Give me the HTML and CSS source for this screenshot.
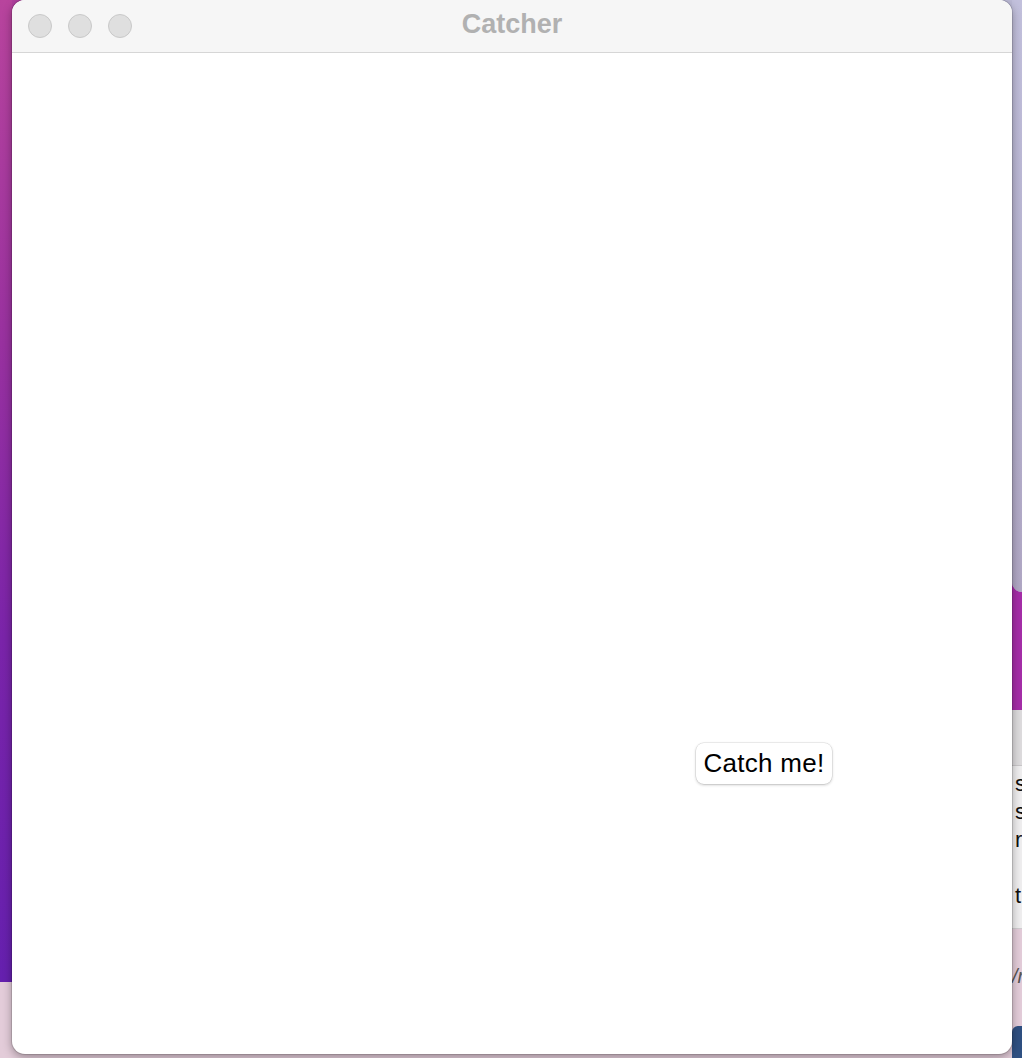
FILE: index.html
```html
<!DOCTYPE html>
<html>
<head>
<meta charset="utf-8">
<link rel="stylesheet" href="styles.css">
</head>
<body>
<div class="desktop">
  <div class="left-strip">
    <div class="left-grad"></div>
    <div class="left-pink"></div>
  </div>
  <div class="window">
    <div class="titlebar">
      <div class="lights">
        <span class="light"></span>
        <span class="light"></span>
        <span class="light"></span>
      </div>
      <div class="title">Catcher</div>
    </div>
    <div class="content">
      <button class="catch">Catch me!</button>
    </div>
  </div>
  <div class="right-strip">
    <div class="r-lavender"></div>
    <div class="r-magenta"></div>
    <div class="r-grey"></div>
    <div class="r-panel">
      <div>s</div>
      <div>s</div>
      <div>r</div>
      <div>&nbsp;</div>
      <div>t</div>
    </div>
    <div class="r-pink">
      <div class="r-path">/r</div>
      <div class="r-blue"></div>
    </div>
  </div>
</div>
</body>
</html>
```

FILE: styles.css
```css
html, body {
  margin: 0;
  padding: 0;
}
body {
  width: 1022px;
  height: 1058px;
  overflow: hidden;
  font-family: "Liberation Sans", Arial, sans-serif;
}
.desktop {
  width: 1022px;
  height: 1058px;
  display: grid;
  grid-template-columns: 12px 1000px 10px;
  background:
    linear-gradient(to bottom, transparent 982px, #e3ccd9 982px),
    linear-gradient(to right, #b0409e 50%, #bcbad6 50%);
}
.left-strip {
  display: flex;
  flex-direction: column;
}
.left-grad {
  height: 982px;
  background: linear-gradient(to bottom, #b8449d 0%, #98319f 35%, #7a24a9 65%, #6520ae 100%);
}
.left-pink {
  flex: 1;
  background: #e3ccd9;
}
.window {
  height: 1054px;
  background: #ffffff;
  border-radius: 13px;
  overflow: hidden;
  box-shadow: 0 0 0 1px rgba(0,0,0,0.12), 0 3px 10px rgba(0,0,0,0.35);
  display: flex;
  flex-direction: column;
  position: relative;
  z-index: 2;
}
.titlebar {
  height: 52px;
  flex: none;
  background: #f6f6f6;
  border-bottom: 1px solid #d6d6d6;
  display: flex;
  align-items: center;
  position: relative;
}
.lights {
  display: flex;
  gap: 16px;
  padding-left: 16px;
}
.light {
  width: 22px;
  height: 22px;
  border-radius: 50%;
  background: #dfdfdf;
  border: 1px solid #c9c9c9;
}
.title {
  position: absolute;
  left: 0;
  right: 0;
  text-align: center;
  font-weight: bold;
  font-size: 27px;
  color: #b1b1b1;
  top: 9px;
}
.content {
  flex: 1;
  position: relative;
}
.catch {
  position: absolute;
  left: 684px;
  top: 690px;
  width: 136px;
  height: 41px;
  padding: 0;
  border: none;
  border-radius: 8px;
  background: #ffffff;
  box-shadow: 0 0 0 0.5px rgba(0,0,0,0.12), 0 1px 3px rgba(0,0,0,0.22);
  font-family: "Liberation Sans", Arial, sans-serif;
  font-size: 26px;
  letter-spacing: 0.3px;
  color: #000;
}
.right-strip {
  display: flex;
  flex-direction: column;
  overflow: hidden;
}
.r-lavender {
  height: 592px;
  background: linear-gradient(to bottom, #c2c0dc 0%, #b6b2cf 50%, #b0a7c4 100%);
  border-bottom-left-radius: 14px;
  box-shadow: 0 10px 0 #a52da8;
}
.r-magenta {
  height: 118px;
  background: #a52da8;
}
.r-grey {
  height: 55px;
  background: #dddbdd;
  border-bottom: 1px solid #c9c7c9;
}
.r-panel {
  height: 158px;
  background: #efeeef;
  border-bottom: 1px solid #d0ced0;
  padding: 4px 0 0 3px;
  font-size: 22px;
  line-height: 28px;
  color: #111;
}
.r-pink {
  flex: 1;
  background: #e3ccd9;
  display: flex;
  flex-direction: column;
}
.r-path {
  margin-top: 36px;
  font-size: 20px;
  font-style: italic;
  color: #555;
  padding-left: 0;
}
.r-blue {
  margin-top: 38px;
  height: 32px;
  background: #2f5082;
  border-top-left-radius: 6px;
}
```
